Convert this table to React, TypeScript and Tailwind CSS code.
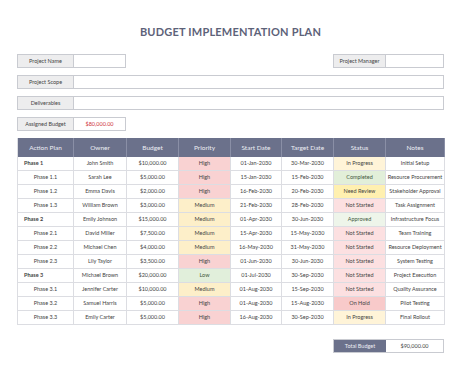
import React from "react";

type Row = {
  plan: string;
  main?: boolean;
  owner: string;
  budget: string;
  priority: "High" | "Medium" | "Low";
  start: string;
  target: string;
  status: string;
  notes: string;
};

const rows: Row[] = [
  { plan: "Phase 1", main: true, owner: "John Smith", budget: "$10,000.00", priority: "High", start: "01-Jan-2030", target: "30-Mar-2030", status: "In Progress", notes: "Initial Setup" },
  { plan: "Phase 1.1", owner: "Sarah Lee", budget: "$5,000.00", priority: "High", start: "15-Jan-2030", target: "15-Feb-2030", status: "Completed", notes: "Resource Procurement" },
  { plan: "Phase 1.2", owner: "Emma Davis", budget: "$2,000.00", priority: "High", start: "16-Feb-2030", target: "20-Feb-2030", status: "Need Review", notes: "Stakeholder Approval" },
  { plan: "Phase 1.3", owner: "William Brown", budget: "$3,000.00", priority: "Medium", start: "21-Feb-2030", target: "28-Feb-2030", status: "Not Started", notes: "Task Assignment" },
  { plan: "Phase 2", main: true, owner: "Emily Johnson", budget: "$15,000.00", priority: "Medium", start: "01-Apr-2030", target: "30-Jun-2030", status: "Approved", notes: "Infrastructure Focus" },
  { plan: "Phase 2.1", owner: "David Miller", budget: "$7,500.00", priority: "Medium", start: "15-Apr-2030", target: "15-May-2030", status: "Not Started", notes: "Team Training" },
  { plan: "Phase 2.2", owner: "Michael Chen", budget: "$4,000.00", priority: "Medium", start: "16-May-2030", target: "31-May-2030", status: "Not Started", notes: "Resource Deployment" },
  { plan: "Phase 2.3", owner: "Lily Taylor", budget: "$3,500.00", priority: "High", start: "01-Jun-2030", target: "30-Jun-2030", status: "Not Started", notes: "System Testing" },
  { plan: "Phase 3", main: true, owner: "Michael Brown", budget: "$20,000.00", priority: "Low", start: "01-Jul-2030", target: "30-Sep-2030", status: "Not Started", notes: "Project Execution" },
  { plan: "Phase 3.1", owner: "Jennifer Carter", budget: "$10,000.00", priority: "Medium", start: "01-Aug-2030", target: "15-Sep-2030", status: "Not Started", notes: "Quality Assurance" },
  { plan: "Phase 3.2", owner: "Samuel Harris", budget: "$5,000.00", priority: "High", start: "01-Aug-2030", target: "15-Aug-2030", status: "On Hold", notes: "Pilot Testing" },
  { plan: "Phase 3.3", owner: "Emily Carter", budget: "$5,000.00", priority: "High", start: "16-Aug-2030", target: "30-Sep-2030", status: "In Progress", notes: "Final Rollout" },
];

const priorityBg: Record<string, string> = {
  High: "bg-[#f9d2d2] text-[#6b3a3a]",
  Medium: "bg-[#fdefc9] text-[#6b5a2e]",
  Low: "bg-[#e1efdb] text-[#44583e]",
};

const statusBg: Record<string, string> = {
  "In Progress": "bg-[#fff4d8] text-[#5e5330]",
  Completed: "bg-[#e2efd9] text-[#44583e]",
  "Need Review": "bg-[#fff0b0] text-[#5e5330]",
  "Not Started": "bg-[#fce0e1] text-[#6b3a3a]",
  Approved: "bg-[#eef5ea] text-[#44583e]",
  "On Hold": "bg-[#f8caca] text-[#6b3a3a]",
};

const headers = ["Action Plan", "Owner", "Budget", "Priority", "Start Date", "Target Date", "Status", "Notes"];

function Label({ text, w }: { text: string; w: string }) {
  return (
    <div className={`${w} h-full flex items-center justify-center bg-[#ededee] border-r border-[#c9cbd1] text-[5.5px] text-[#444]`}>
      {text}
    </div>
  );
}

export default function App() {
  const cell = "flex items-center justify-center border-r border-b border-[#dcdde2] text-[5.5px] text-[#444] whitespace-nowrap";
  return (
    <div className="w-[474px] h-[366px] bg-white" style={{ fontFamily: "Lato, 'Open Sans', sans-serif" }}>
      <div className="ml-[17px] w-[427px] pt-[25px] flex flex-col">
        <div className="h-[14px] flex items-center justify-center text-[11px] font-bold tracking-[0.2px] text-[#5d6279]">
          BUDGET IMPLEMENTATION PLAN
        </div>
        <div className="mt-[15px] flex justify-between h-[14px]">
          <div className="flex w-[109px] h-full border border-[#c9cbd1]">
            <Label text="Project Name" w="w-[56px]" />
            <div className="flex-1 bg-white" />
          </div>
          <div className="flex w-[111px] h-full border border-[#c9cbd1]">
            <Label text="Project Manager" w="w-[52px]" />
            <div className="flex-1 bg-white" />
          </div>
        </div>
        <div className="mt-[7px] flex h-[14px] border border-[#c9cbd1]">
          <Label text="Project Scope" w="w-[56px]" />
          <div className="flex-1" />
        </div>
        <div className="mt-[7px] flex h-[14px] border border-[#c9cbd1]">
          <Label text="Deliverables" w="w-[56px]" />
          <div className="flex-1" />
        </div>
        <div className="mt-[7px] flex w-[109px] h-[14px] border border-[#c9cbd1]">
          <Label text="Assigned Budget" w="w-[56px]" />
          <div className="flex-1 flex items-center justify-center text-[5.5px] text-[#d0343b]">$80,000.00</div>
        </div>
        <div className="mt-[7px] grid grid-cols-[56px_53px_52px_52px_51px_52px_52px_59px] border-l border-[#dcdde2]">
          {headers.map((h) => (
            <div key={h} className="h-[19px] flex items-center justify-center bg-[#6b718b] border-r border-[#8a8fa6] text-[6.5px] text-[#eceef4]">
              {h}
            </div>
          ))}
          {rows.map((r) => (
            <React.Fragment key={r.plan}>
              <div className={`${cell} h-[14px] ${r.main ? "justify-start pl-[6px] font-bold text-[#222]" : ""}`}>{r.plan}</div>
              <div className={`${cell} h-[14px]`}>{r.owner}</div>
              <div className={`${cell} h-[14px]`}>{r.budget}</div>
              <div className={`${cell} h-[14px] ${priorityBg[r.priority]}`}>{r.priority}</div>
              <div className={`${cell} h-[14px]`}>{r.start}</div>
              <div className={`${cell} h-[14px]`}>{r.target}</div>
              <div className={`${cell} h-[14px] ${statusBg[r.status]}`}>{r.status}</div>
              <div className={`${cell} h-[14px]`}>{r.notes}</div>
            </React.Fragment>
          ))}
        </div>
        <div className="mt-[14px] self-end flex w-[111px] h-[14px] border border-[#c9cbd1]">
          <div className="w-[52px] h-full flex items-center justify-center bg-[#6b718b] text-[5.5px] text-[#eceef4]">Total Budget</div>
          <div className="flex-1 flex items-center justify-center text-[5.5px] text-[#444]">$90,000.00</div>
        </div>
      </div>
    </div>
  );
}
